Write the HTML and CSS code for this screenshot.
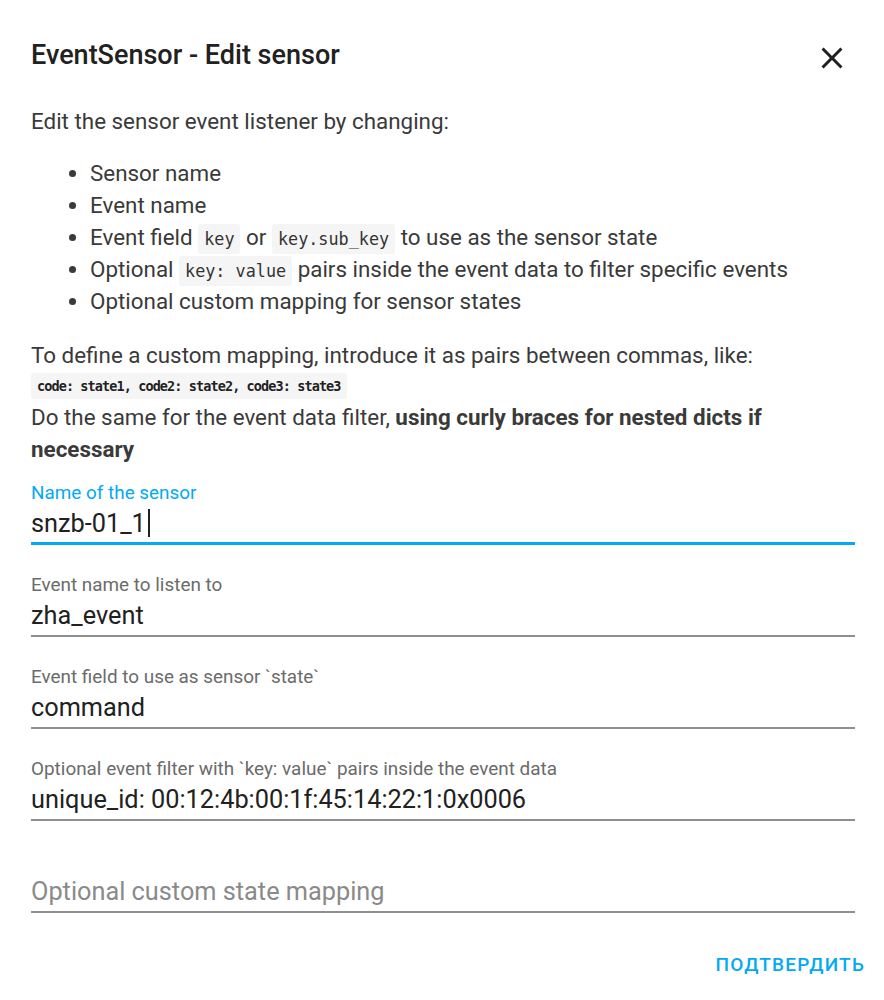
FILE: index.html
```html
<!DOCTYPE html>
<html>
<head>
<meta charset="utf-8">
<link rel="stylesheet" href="styles.css">
</head>
<body>
<div class="dialog">
  <header class="head">
    <h2 class="title">EventSensor - Edit sensor</h2>
    <button class="close" aria-label="close">
      <svg viewBox="0 0 24 24"><path d="M19 6.41L17.59 5 12 10.59 6.41 5 5 6.41 10.59 12 5 17.59 6.41 19 12 13.41 17.59 19 19 17.59 13.41 12z" fill="#212121"/></svg>
    </button>
  </header>
  <div class="content">
    <p class="intro">Edit the sensor event listener by changing:</p>
    <ul class="list">
      <li>Sensor name</li>
      <li>Event name</li>
      <li>Event field <code>key</code> or <code>key.sub_key</code> to use as the sensor state</li>
      <li>Optional <code>key: value</code> pairs inside the event data to filter specific events</li>
      <li>Optional custom mapping for sensor states</li>
    </ul>
    <p class="para">To define a custom mapping, introduce it as pairs between commas, like:</p>
    <div class="codeline"><code class="block">code: state1, code2: state2, code3: state3</code></div>
    <p class="para">Do the same for the event data filter, <b>using curly braces for nested dicts if</b><br><b>necessary</b></p>

    <div class="fields">
      <div class="field focused">
        <label class="label">Name of the sensor</label>
        <div class="value">snzb-01_1<span class="caret"></span></div>
      </div>
      <div class="field">
        <label class="label">Event name to listen to</label>
        <div class="value">zha_event</div>
      </div>
      <div class="field">
        <label class="label">Event field to use as sensor `state`</label>
        <div class="value">command</div>
      </div>
      <div class="field">
        <label class="label">Optional event filter with `key: value` pairs inside the event data</label>
        <div class="value">unique_id: 00:12:4b:00:1f:45:14:22:1:0x0006</div>
      </div>
      <div class="field empty">
        <span class="label"></span>
        <div class="value placeholder">Optional custom state mapping</div>
      </div>
    </div>
  </div>
  <div class="actions">
    <button class="confirm">ПОДТВЕРДИТЬ</button>
  </div>
</div>
</body>
</html>
```
FILE: styles.css
```css
html, body {
  margin: 0;
  padding: 0;
  background: #fff;
}
body {
  font-family: Roboto, "Noto Sans", sans-serif;
  color: #212121;
}
.dialog {
  width: 884px;
  box-sizing: border-box;
  padding: 0 29px 0 31px;
}
.head {
  display: flex;
  align-items: center;
  justify-content: space-between;
  height: 105px;
  padding-top: 5px;
  box-sizing: border-box;
}
.title {
  margin: 0;
  font-size: 27px;
  font-weight: 500;
  color: #212121;
}
.close {
  border: 0;
  background: none;
  padding: 0;
  margin: 6px 5px 0 0;
  width: 36px;
  height: 36px;
  display: flex;
  align-items: center;
  justify-content: center;
}
.close svg { width: 36px; height: 36px; }
.content {
  font-size: 22.4px;
  line-height: 32px;
  color: #3a3a3a;
}
.intro { margin: 0 0 20px; }
.list {
  margin: 0 0 22px;
  padding-left: 59px;
}
.list li { line-height: 32px; }
code {
  font-family: "DejaVu Sans Mono", monospace;
  font-size: 16.8px;
  line-height: 1;
  background: #f5f5f5;
  padding: 5px 6px;
  border-radius: 3px;
  color: #333;
}
.codeline {
  height: 30px;
  display: flex;
  align-items: center;
}
code.block {
  display: block;
  font-size: 13.5px;
  line-height: 16px;
  letter-spacing: -0.9px;
  font-weight: 600;
  padding: 5px 6px;
  color: #222;
}
.para { margin: 0; }
.fields {
  display: flex;
  flex-direction: column;
  gap: 29px;
  padding-top: 17px;
}
.field {
  display: flex;
  flex-direction: column;
  border-bottom: 2px solid #8f8f8f;
}
.label {
  display: block;
  height: 22px;
  font-size: 18.9px;
  line-height: 22px;
  margin-bottom: 5px;
  color: #6b6b6b;
}
.value {
  font-size: 25.3px;
  line-height: 30px;
  padding-bottom: 4px;
  color: #212121;
}
.focused { border-bottom: 3px solid #03a9f4; }
.focused .value { padding-bottom: 3px; }
.focused .label { color: #03a9f4; }
.caret {
  display: inline-block;
  width: 2px;
  height: 28px;
  background: #212121;
  vertical-align: -5px;
  margin-left: 2px;
}
.placeholder { color: #8a8a8a; }
.actions {
  display: flex;
  justify-content: flex-end;
  padding-top: 41px;
}
.confirm {
  border: 0;
  background: none;
  font-family: Roboto, sans-serif;
  font-size: 19px;
  line-height: 22px;
  font-weight: 500;
  letter-spacing: 1.2px;
  color: #03a9f4;
  padding: 0;
  margin-right: -10px;
}
```
